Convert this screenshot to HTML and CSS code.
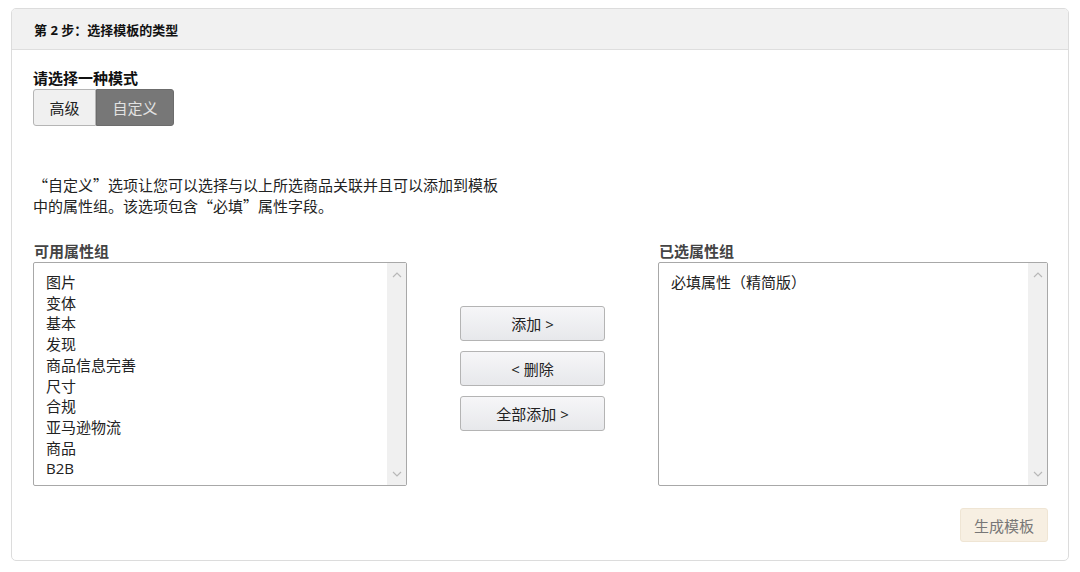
FILE: index.html
```html
<!DOCTYPE html>
<html lang="zh-CN">
  <head>
    <meta charset="UTF-8" />
    <meta name="viewport" content="width=device-width, initial-scale=1.0" />
    <title>选择模板的类型</title>
    <link rel="stylesheet" href="styles.css">
  </head>
  <body>
    <div class="panel">
      <div class="panel-head">第 2 步：选择模板的类型</div>
      <div class="panel-body">
        <div class="mode-label">请选择一种模式</div>
        <div class="toggle">
          <button class="toggle-btn">高级</button>
          <button class="toggle-btn active">自定义</button>
        </div>

        <p class="desc">“自定义”选项让您可以选择与以上所选商品关联并且可以添加到模板中的属性组。该选项包含“必填”属性字段。</p>

        <div class="picker">
          <div class="col col-left">
            <div class="col-label">可用属性组</div>
            <div class="listbox">
              <ul class="items">
                <li>图片</li>
                <li>变体</li>
                <li>基本</li>
                <li>发现</li>
                <li>商品信息完善</li>
                <li>尺寸</li>
                <li>合规</li>
                <li>亚马逊物流</li>
                <li>商品</li>
                <li>B2B</li>
              </ul>
              <div class="scrollbar">
                <svg width="10" height="6" viewBox="0 0 10 6"><path d="M1 5 L5 1 L9 5" fill="none" stroke="#b8b8b8" stroke-width="1.2"/></svg>
                <svg width="10" height="6" viewBox="0 0 10 6"><path d="M1 1 L5 5 L9 1" fill="none" stroke="#b8b8b8" stroke-width="1.2"/></svg>
              </div>
            </div>
          </div>

          <div class="col col-mid">
            <button class="move-btn">添加 &gt;</button>
            <button class="move-btn">&lt; 删除</button>
            <button class="move-btn">全部添加 &gt;</button>
          </div>

          <div class="col col-right">
            <div class="col-label">已选属性组</div>
            <div class="listbox">
              <ul class="items">
                <li>必填属性（精简版）</li>
              </ul>
              <div class="scrollbar">
                <svg width="10" height="6" viewBox="0 0 10 6"><path d="M1 5 L5 1 L9 5" fill="none" stroke="#b8b8b8" stroke-width="1.2"/></svg>
                <svg width="10" height="6" viewBox="0 0 10 6"><path d="M1 1 L5 5 L9 1" fill="none" stroke="#b8b8b8" stroke-width="1.2"/></svg>
              </div>
            </div>
          </div>
        </div>

        <div class="footer">
          <button class="generate">生成模板</button>
        </div>
      </div>
    </div>
  </body>
</html>
```

FILE: styles.css
```css
* {
  box-sizing: border-box;
}
body {
  margin: 0;
  background: #fff;
  font-family: "Open Sans", "Noto Sans CJK SC", sans-serif;
  color: #333;
}
.panel {
  margin: 8px 11px 0;
  height: 553px;
  border: 1px solid #dcdcdc;
  border-radius: 5px;
  overflow: hidden;
}
.panel-head {
  height: 41px;
  background: #f1f1f1;
  border-bottom: 1px solid #dedede;
  padding: 0 22px;
  display: flex;
  align-items: center;
  font-size: 13px;
  font-weight: bold;
  color: #111;
}
.panel-body {
  padding: 18px 20px 0 21px;
}
.mode-label {
  font-size: 15px;
  font-weight: bold;
  line-height: 20px;
  color: #111;
}
.toggle {
  display: flex;
  margin-top: 1px;
}
.toggle-btn {
  font-family: inherit;
  font-size: 15px;
  height: 37px;
  padding: 0;
  border: 1px solid #b5b5b5;
  background: #f0f0f0;
  color: #222;
  cursor: pointer;
}
.toggle-btn:first-child {
  width: 63px;
  border-radius: 3px 0 0 3px;
}
.toggle-btn.active {
  width: 78px;
  background: #777;
  border-color: #6c6c6c;
  color: #e2e2e2;
  border-radius: 0 3px 3px 0;
}
.desc {
  width: 478px;
  margin: 48px 0 0;
  font-family: "Noto Sans CJK SC", sans-serif;
  font-size: 15px;
  line-height: 21px;
  color: #222;
}
.picker {
  display: flex;
  gap: 53px;
  margin-top: 25px;
}
.col-left {
  width: 374px;
}
.col-right {
  width: 390px;
}
.col-mid {
  width: 145px;
  padding-top: 65px;
  display: flex;
  flex-direction: column;
  gap: 10px;
}
.col-label {
  font-size: 15px;
  font-weight: bold;
  line-height: 20px;
  color: #444;
  margin-left: 1px;
}
.listbox {
  margin-top: 1px;
  height: 224px;
  border: 1px solid #a8a8a8;
  border-radius: 2px;
  display: flex;
  background: #fff;
}
.items {
  flex: 1;
  list-style: none;
  margin: 0;
  padding: 9px 12px 0;
  font-size: 15px;
  line-height: 20.7px;
  color: #222;
}
.scrollbar {
  width: 19px;
  background: #f0f0f0;
  display: flex;
  flex-direction: column;
  justify-content: space-between;
  align-items: center;
  padding: 9px 0 8px;
}
.move-btn {
  height: 35px;
  font-family: inherit;
  font-size: 15px;
  color: #222;
  border: 1px solid #b4b4b4;
  border-radius: 3px;
  background: linear-gradient(#f6f6f8, #e7e8eb);
  cursor: pointer;
}
.footer {
  display: flex;
  justify-content: flex-end;
  margin-top: 22px;
}
.generate {
  width: 88px;
  height: 34px;
  font-family: inherit;
  font-size: 15px;
  color: #777;
  background: #f7efe2;
  border: 1px solid #efe5d4;
  border-radius: 3px;
  cursor: pointer;
}
```
